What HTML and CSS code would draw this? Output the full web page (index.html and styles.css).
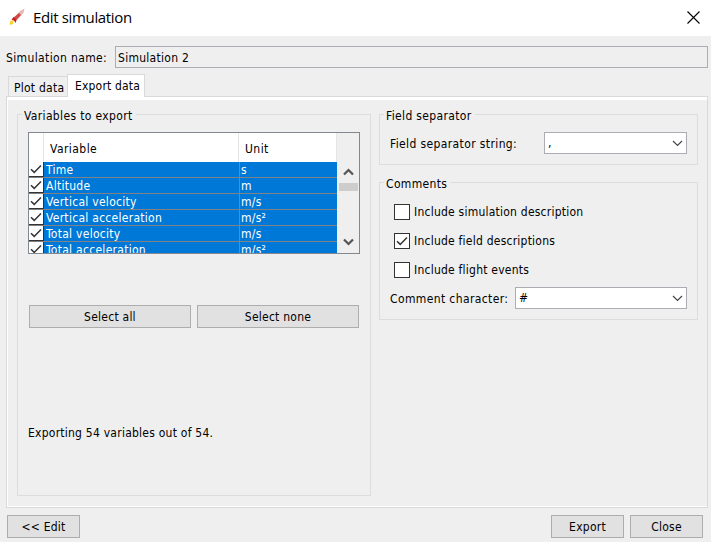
FILE: index.html
```
<!DOCTYPE html>
<html lang="en">
<head>
<meta charset="utf-8">
<title>Edit simulation</title>
<link rel="stylesheet" href="styles.css">
</head>
<body>
<svg class="defs" width="0" height="0">
  <symbol id="tick" viewBox="0 0 14 14"><path d="M2 7.2 5.2 10.4 12 3.4" fill="none" stroke="#333" stroke-width="1.5"/></symbol>
  <symbol id="drop" viewBox="0 0 11 7"><path d="M1 1 5.500 5.500 10 1" fill="none" stroke="#444" stroke-width="1.200"/></symbol>
</svg>
<header class="titlebar">
  <svg class="rocket" width="18" height="18" viewBox="0 0 18 18">
    <path d="M16.500 .5 15.500 5 8 13 5.500 10.500 12 3Z" fill="#e6b8b8"/>
    <path d="M11 5 13 7 7.500 13 4.500 10.500Z" fill="#cf4a46"/>
    <path d="M5.500 9 8.500 12 7.500 15 6 12.500 3.500 12Z" fill="#c41f1a"/>
    <path d="M2.500 12.500 5 13 5.500 15.500 3 17 1.500 16Z" fill="#f7d52a"/>
  </svg>
  <h1>Edit simulation</h1>
  <svg class="close" width="13" height="13" viewBox="0 0 13 13"><path d="M.5.5l12 12M12.500.5l-12 12" stroke="#000" stroke-width="1.100"/></svg>
</header>
<div class="name-row"><label>Simulation name:</label><div class="name-field">Simulation 2</div></div>
<nav class="tabs"><div class="tab">Plot data</div><div class="tab active">Export data</div></nav>
<main class="panel">
  <section class="group variables">
    <h2>Variables to export</h2>
    <div class="table">
      <div class="grid">
        <div class="row head"><i></i><b>Variable</b><b>Unit</b></div>
        <div class="row"><i><svg><use href="#tick"/></svg></i><span>Time</span><span>s</span></div>
        <div class="row"><i><svg><use href="#tick"/></svg></i><span>Altitude</span><span>m</span></div>
        <div class="row"><i><svg><use href="#tick"/></svg></i><span>Vertical velocity</span><span>m/s</span></div>
        <div class="row"><i><svg><use href="#tick"/></svg></i><span>Vertical acceleration</span><span>m/s²</span></div>
        <div class="row"><i><svg><use href="#tick"/></svg></i><span>Total velocity</span><span>m/s</span></div>
        <div class="row"><i><svg><use href="#tick"/></svg></i><span>Total acceleration</span><span>m/s²</span></div>
      </div>
      <div class="scroll">
        <svg width="11" height="8" viewBox="0 0 11 8"><path d="M1 6.500 5.500 2 10 6.500" fill="none" stroke="#555" stroke-width="2.200"/></svg>
        <div class="thumb"></div>
        <svg class="down" width="11" height="8" viewBox="0 0 11 8"><path d="M1 1.500 5.500 6 10 1.500" fill="none" stroke="#555" stroke-width="2.200"/></svg>
      </div>
    </div>
    <div class="select-row"><button>Select all</button><button>Select none</button></div>
    <p class="status">Exporting 54 variables out of 54.</p>
  </section>
  <div class="right">
    <section class="group separator">
      <h2>Field separator</h2>
      <div class="field"><label>Field separator string:</label><div class="combo sep"><span>,</span><svg width="11" height="7"><use href="#drop"/></svg></div></div>
    </section>
    <section class="group comments">
      <h2>Comments</h2>
      <div class="check"><i></i><span>Include simulation description</span></div>
      <div class="check"><i><svg><use href="#tick"/></svg></i><span>Include field descriptions</span></div>
      <div class="check"><i></i><span>Include flight events</span></div>
      <div class="field"><label>Comment character:</label><div class="combo"><span>#</span><svg width="11" height="7"><use href="#drop"/></svg></div></div>
    </section>
  </div>
</main>
<footer class="footer"><button>&lt;&lt; Edit</button><button class="export">Export</button><button>Close</button></footer>
</body>
</html>
```
FILE: styles.css
```
* { box-sizing: border-box; }
body { margin: 0; width: 711px; height: 542px; overflow: hidden; background: #efefef; color: #000; font: 12px/16px "DejaVu Sans Condensed", "DejaVu Sans", sans-serif; font-stretch: condensed; letter-spacing: .24px; white-space: nowrap; }
h1, h2, p { margin: 0; font-weight: normal; }
i, b { font-style: normal; font-weight: normal; }
svg { display: block; flex: none; }
.defs { position: absolute; }
.titlebar { display: flex; align-items: center; height: 36px; padding: 0 11px 2px 8px; background: #fff; }
.titlebar h1 { margin-left: 7px; font: 15px/20px "Open Sans", "Noto Sans", sans-serif; letter-spacing: -.35px; }
.close { margin-left: auto; }
.name-row { display: flex; height: 32px; margin-top: 10px; padding: 0 3px 0 6px; }
.name-row label { width: 109px; line-height: 24px; letter-spacing: .37px; }
.name-field { flex: 1; height: 22px; border: 1px solid #abadb3; padding-left: 2px; line-height: 22px; letter-spacing: .28px; }
.tabs { display: flex; align-items: flex-end; height: 22px; margin-top: -4px; padding-left: 8px; position: relative; }
.tab { width: 59px; height: 20px; border: 1px solid #d9d9d9; border-width: 1px 0 0 1px; padding-left: 5px; line-height: 22px; }
.tab.active { width: 78px; height: 23px; margin-bottom: -1px; border-right-width: 1px; padding-left: 7px; background: #fff; line-height: 22px; letter-spacing: .18px; }
.panel { display: flex; gap: 8px; height: 412px; margin: 0 3px 0 6px; border: 1px solid #d9d9d9; box-shadow: inset 0 3px #fff, inset 1px -1px #fff; padding: 17px 9px 0 10px; }
.group { border: 1px solid #dcdcdc; }
.group h2 { width: max-content; height: 16px; margin: -8px 0 0 4px; padding: 0 3px 0 2px; background: #efefef; font-size: 12px; letter-spacing: .35px; line-height: 18px; }
.group.variables h2 { margin-left: -6px; }
.variables { width: 354px; height: 382px; padding: 0 10px; }
.table { display: flex; width: 332px; height: 122px; margin-top: 9px; border: 1px solid #828790; overflow: hidden; }
.grid { width: 309px; height: 120px; overflow: hidden; }
.row { display: grid; grid-template-columns: 16px 194px 98px; width: 308px; height: 16px; background: #0078d7; border-bottom: 1px solid #828282; color: #fff; line-height: 16px; letter-spacing: .28px; }
.row span { padding-left: 1px; height: 15px; }
.row span:last-child { border-left: 1px solid #828282; }
.row i { width: 15px; height: 15px; background: #fff; border-right: 1px solid #333; border-bottom: 1px solid #333; }
.row i svg { width: 14px; height: 14px; }
.row.head { height: 29px; background: #fff; border: 0; color: #000; line-height: 32px; }
.row.head i { height: 29px; border: 0; border-right: 1px solid #e5e5e5; }
.head b { height: 29px; padding-left: 5px; border-right: 1px solid #e5e5e5; letter-spacing: .45px; }
.head b:last-child { padding-left: 6px; }
.scroll { width: 21px; height: 120px; padding: 35px 1px 0 1px; }
.scroll svg { margin-left: 4px; }
.thumb { width: 19px; height: 8px; margin-top: 7px; background: #cdcdcd; }
.scroll .down { margin-top: 47px; }
button { width: 73px; height: 23px; border: 1px solid #adadad; background: #e1e1e1; padding: 0; color: #000; font: inherit; letter-spacing: inherit; line-height: 22px; }
.select-row { display: flex; gap: 6px; margin: 51px 0 0 1px; }
.select-row button { width: 162px; }
.status { margin-top: 97px; }
.right { width: 319px; }
.separator { height: 51px; }
.comments { height: 138px; margin-top: 17px; }
.field { display: flex; justify-content: space-between; padding: 0 10px; line-height: 24px; letter-spacing: .38px; }
.separator .field { height: 23px; margin-top: 9px; }
.combo { display: flex; align-items: center; justify-content: space-between; width: 172px; height: 22px; border: 1px solid #abadb3; background: #fff; padding: 0 3px; }
.combo.sep { width: 143px; }
.check { display: flex; align-items: center; height: 16px; margin: 13px 0 0 14px; line-height: 18px; letter-spacing: .23px; }
.check i { width: 16px; height: 16px; margin-right: 4px; border: 1px solid #333; background: #fff; }
.check i svg { width: 14px; height: 14px; }
.comments .field { margin-top: 9px; }
.footer { display: flex; gap: 6px; padding: 7px 8px 0 7px; }
.export { margin-left: auto; }
```
